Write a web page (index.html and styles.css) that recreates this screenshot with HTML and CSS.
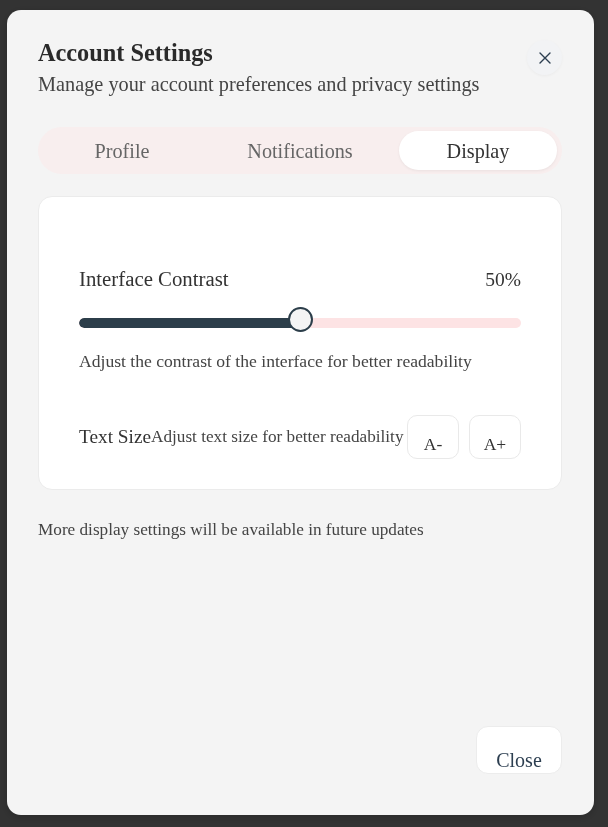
FILE: index.html
```html
<!DOCTYPE html>
<html lang="en">
<head>
<meta charset="utf-8">
<title>Account Settings</title>
<link rel="stylesheet" href="styles.css">
</head>
<body>
<div class="page">
  <div class="page-band band-1"></div>
  <div class="page-band band-2"></div>
</div>
<div class="overlay"></div>

<div class="modal" role="dialog" aria-labelledby="modal-title">
  <header class="modal-header">
    <div class="modal-heading">
      <h1 id="modal-title" class="modal-title">Account Settings</h1>
      <p class="modal-subtitle">Manage your account preferences and privacy settings</p>
    </div>
    <button class="icon-close" aria-label="Close">
      <svg width="14" height="14" viewBox="0 0 14 14" aria-hidden="true"><path d="M2 2 L12 12 M12 2 L2 12" stroke="#2c3e50" stroke-width="1.4" stroke-linecap="round" fill="none"/></svg>
    </button>
  </header>

  <nav class="tabs">
    <button class="tab">Profile</button>
    <button class="tab">Notifications</button>
    <button class="tab tab-active">Display</button>
  </nav>

  <div class="card">
    <div class="setting-head">
      <span class="setting-label">Interface Contrast</span>
      <span class="setting-value">50%</span>
    </div>
    <div class="slider">
      <div class="slider-track">
        <div class="slider-fill" style="width: 50%"></div>
      </div>
      <div class="slider-thumb" style="left: 50%"></div>
    </div>
    <p class="setting-help">Adjust the contrast of the interface for better readability</p>

    <div class="text-size-row">
      <span class="setting-label label-size">Text Size</span><span class="setting-desc">Adjust text size for better readability</span>
      <div class="size-buttons">
        <button class="size-btn">A-</button>
        <button class="size-btn">A+</button>
      </div>
    </div>
  </div>

  <p class="footnote">More display settings will be available in future updates</p>

  <footer class="modal-footer">
    <button class="btn-close">Close</button>
  </footer>
</div>
</body>
</html>
```

FILE: styles.css
```css
* { box-sizing: border-box; }

html, body {
  margin: 0;
  height: 100%;
}

body {
  font-family: "Liberation Serif", "DejaVu Serif", serif;
  background: #ffffff;
  color: #1a1a1a;
  overflow: hidden;
}

/* underlying page (dimmed by overlay) */
.page {
  width: 100%;
}
.page-band {
  height: 30px;
  background: #ececec;
}
.band-1 { margin-top: 310px; }
.band-2 { margin-top: 260px; }

.overlay {
  position: fixed;
  inset: 0;
  background: rgba(0, 0, 0, 0.8);
}

/* modal */
.modal {
  position: fixed;
  left: 7px;
  top: 10px;
  width: 587px;
  height: 805px;
  background: #f4f4f4;
  border-radius: 14px;
  padding: 30px 32px 41px 31px;
  display: flex;
  flex-direction: column;
  box-shadow: 0 2px 10px rgba(0,0,0,0.2);
}

.modal-header {
  display: flex;
  justify-content: space-between;
  align-items: flex-start;
}
.modal-title {
  margin: 0;
  font-size: 24.3px;
  line-height: 26px;
  font-weight: 700;
  color: #2a2a2a;
}
.modal-subtitle {
  margin: 5px 0 0;
  font-size: 20.3px;
  line-height: 26px;
  color: #444;
}
.icon-close {
  width: 35px;
  height: 35px;
  margin-top: 0;
  border: none;
  border-radius: 50%;
  background: #f2f3f5;
  box-shadow: 0 1px 3px rgba(0,0,0,0.04);
  display: flex;
  align-items: center;
  justify-content: center;
  padding: 0;
  cursor: pointer;
}

/* tabs */
.tabs {
  margin-top: 30px;
  display: grid;
  grid-template-columns: repeat(3, 1fr);
  gap: 20px;
  padding: 4px 5px;
  background: #f8eeee;
  border-radius: 24px;
}
.tab {
  height: 39px;
  border: none;
  background: transparent;
  border-radius: 20px;
  font-family: inherit;
  font-size: 20.2px;
  line-height: 24px;
  color: #666;
  padding: 0;
}
.tab-active {
  background: #ffffff;
  color: #333;
  box-shadow: 0 1px 3px rgba(0,0,0,0.06);
}

/* card */
.card {
  margin-top: 22px;
  background: #ffffff;
  border: 1px solid #ebebeb;
  border-radius: 14px;
  padding: 70px 40px 30px;
}
.setting-head {
  display: flex;
  justify-content: space-between;
  align-items: baseline;
  height: 24px;
  line-height: 24px;
}
.setting-label {
  font-size: 20.8px;
  color: #333;
}
.label-size {
  font-size: 19.3px;
}
.setting-value {
  font-size: 19.5px;
  color: #333;
}
.slider {
  position: relative;
  margin-top: 16px;
  height: 25px;
}
.slider-track {
  position: absolute;
  left: 0;
  right: 0;
  top: 11px;
  height: 10px;
  border-radius: 5px;
  background: #fde3e4;
  overflow: hidden;
}
.slider-fill {
  height: 100%;
  background: #2c3e4a;
  border-radius: 5px;
}
.slider-thumb {
  position: absolute;
  top: 0;
  width: 25px;
  height: 25px;
  margin-left: -12px;
  border-radius: 50%;
  background: #f4f4f4;
  border: 2px solid #2c3e4a;
}
.setting-help {
  margin: 18px 0 0;
  font-size: 17.6px;
  line-height: 22px;
  color: #444;
}

.text-size-row {
  margin-top: 43px;
  display: flex;
  align-items: center;
  white-space: nowrap;
  line-height: 24px;
}
.setting-desc {
  font-size: 17.2px;
  color: #444;
}
.size-buttons {
  margin-left: auto;
  display: flex;
  flex-shrink: 0;
  gap: 10px;
}
.size-btn {
  width: 52px;
  height: 44px;
  padding: 14px 0 0;
  border: 1px solid #e9e9e9;
  border-radius: 10px;
  background: #ffffff;
  font-family: inherit;
  font-size: 17.5px;
  color: #333;
}

.footnote {
  margin: 29px 0 0;
  font-size: 17.2px;
  line-height: 22px;
  color: #444;
}

.modal-footer {
  margin-top: auto;
  display: flex;
  justify-content: flex-end;
}
.btn-close {
  width: 86px;
  height: 48px;
  padding: 19px 0 0;
  border: 1px solid #ececec;
  border-radius: 12px;
  background: #ffffff;
  font-family: inherit;
  font-size: 20px;
  line-height: 22px;
  color: #2c3e50;
}
```
